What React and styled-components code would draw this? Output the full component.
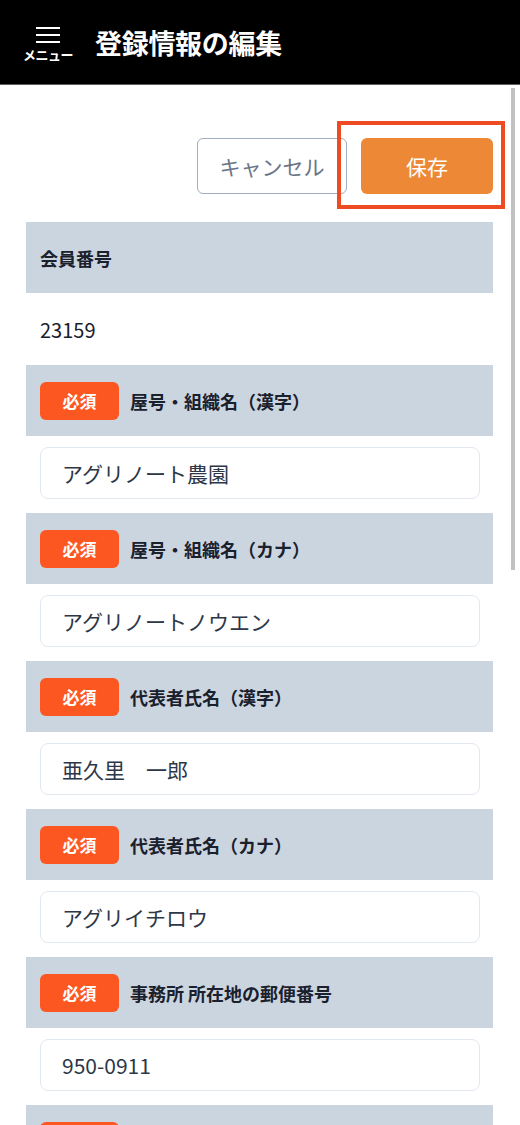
import React from "react";
import styled, { createGlobalStyle } from "styled-components";

const GlobalStyle = createGlobalStyle`
    * {
        box-sizing: border-box;
    }
    html, body {
        margin: 0;
        padding: 0;
        background: #fff;
        font-family: "Noto Sans CJK JP", "Noto Sans", sans-serif;
    }
`;

const fields = [
    { label: "屋号・組織名（漢字）", value: "アグリノート農園", required: true },
    { label: "屋号・組織名（カナ）", value: "アグリノートノウエン", required: true },
    { label: "代表者氏名（漢字）", value: "亜久里　一郎", required: true },
    { label: "代表者氏名（カナ）", value: "アグリイチロウ", required: true },
    { label: "事務所 所在地の郵便番号", value: "950-0911", required: true },
    { label: "事務所 所在地の都道府県", value: "新潟県", required: true },
    { label: "事務所 所在地の市区町村", value: "新潟市中央区", required: true },
];

function App() {
    return (
        <Page>
            <GlobalStyle />
            <Header>
                <MenuButton>
                    <Burger>
                        <span />
                        <span />
                        <span />
                    </Burger>
                    <MenuLabel>メニュー</MenuLabel>
                </MenuButton>
                <Title>登録情報の編集</Title>
            </Header>
            <Scroll>
                <ScrollThumb />
                <Content>
                    <Actions>
                        <CancelButton>キャンセル</CancelButton>
                        <Highlight>
                            <SaveButton>保存</SaveButton>
                        </Highlight>
                    </Actions>

                    <SectionHead>
                        <Label>会員番号</Label>
                    </SectionHead>
                    <StaticValue>23159</StaticValue>

                    {fields.map((f) => (
                        <div key={f.label}>
                            <SectionHead>
                                {f.required && <Badge>必須</Badge>}
                                <Label>{f.label}</Label>
                            </SectionHead>
                            <InputWrap>
                                <Input type="text" defaultValue={f.value} />
                            </InputWrap>
                        </div>
                    ))}
                </Content>
            </Scroll>
        </Page>
    );
}

export default App;

const Page = styled.div`
    display: flex;
    flex-direction: column;
    height: 100vh;
    overflow: hidden;
`;

const Header = styled.header`
    flex: 0 0 85px;
    display: flex;
    align-items: center;
    background-color: #000;
    border-bottom: 1px solid #5c5c5c;
    padding: 0 0 0 22px;
`;

const MenuButton = styled.div`
    display: flex;
    flex-direction: column;
    align-items: center;
    width: 52px;
    margin-top: 4px;
    cursor: pointer;
`;

const Burger = styled.div`
    display: flex;
    flex-direction: column;
    gap: 5px;
    width: 24px;
    span {
        display: block;
        height: 2px;
        background: #fff;
    }
`;

const MenuLabel = styled.div`
    margin-top: 5px;
    color: #fff;
    font-size: 13px;
    font-weight: 700;
    line-height: 14px;
    letter-spacing: -0.5px;
    white-space: nowrap;
`;

const Title = styled.h1`
    margin: 0 0 0 21px;
    color: #fff;
    font-size: 27px;
    font-weight: 700;
    line-height: 1;
    letter-spacing: -0.3px;
`;

const Scroll = styled.main`
    position: relative;
    flex: 1;
    overflow: hidden;
`;

/* the page's scrollbar thumb, drawn over the content's right edge */
const ScrollThumb = styled.div`
    position: absolute;
    top: 3px;
    right: 5px;
    width: 4px;
    height: 482px;
    background-color: #c1c1c1;
`;

const Content = styled.div`
    padding: 53px 27px 27px 26px;
`;

const Actions = styled.div`
    display: flex;
    justify-content: flex-end;
    gap: 14px;
    margin-bottom: 28px;
`;

const BaseButton = styled.button`
    height: 56px;
    border-radius: 6px;
    font-family: inherit;
    font-size: 21px;
    cursor: pointer;
`;

const CancelButton = styled(BaseButton)`
    width: 150px;
    background: #fff;
    border: 1px solid #a0aec0;
    color: #6b7486;
`;

const Highlight = styled.div`
    position: relative;
    &::after {
        content: "";
        position: absolute;
        top: -17px;
        left: -24px;
        right: -12px;
        bottom: -15px;
        border: 4px solid #ef4b23;
        pointer-events: none;
    }
`;

const SaveButton = styled(BaseButton)`
    display: block;
    width: 132px;
    background: #ed8936;
    border: none;
    color: #fff;
`;

const SectionHead = styled.div`
    display: flex;
    align-items: center;
    height: 71px;
    padding: 0 14px;
    background-color: #cbd5e0;
`;

const Badge = styled.span`
    display: inline-flex;
    align-items: center;
    justify-content: center;
    width: 79px;
    height: 38px;
    margin-right: 11px;
    border-radius: 6px;
    background-color: #fd5721;
    color: #fff;
    font-size: 17px;
    font-weight: 700;
`;

const Label = styled.span`
    color: #1a202c;
    font-size: 18px;
    font-weight: 700;
`;

const StaticValue = styled.div`
    display: flex;
    align-items: center;
    height: 72px;
    padding: 0 14px;
    color: #1a202c;
    font-size: 20px;
`;

const InputWrap = styled.div`
    padding: 11px 13px 14px 14px;
`;

const Input = styled.input`
    display: block;
    width: 100%;
    height: 52px;
    padding: 0 21px;
    border: 1px solid #e2e8f0;
    border-radius: 8px;
    background: #fff;
    color: #2d3748;
    font-family: inherit;
    font-size: 21px;
    outline: none;
`;
